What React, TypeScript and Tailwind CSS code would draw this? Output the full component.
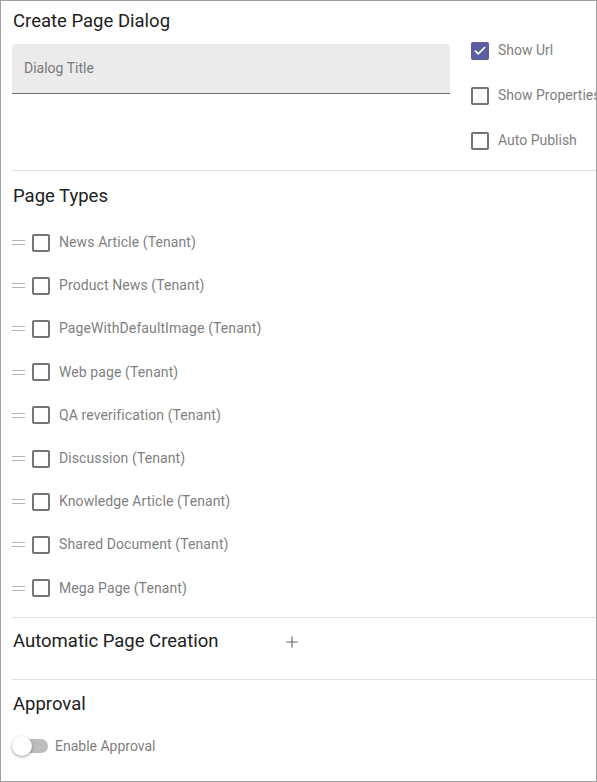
import { Check, Plus } from "lucide-react";

const pageTypes = [
  "News Article (Tenant)",
  "Product News (Tenant)",
  "PageWithDefaultImage (Tenant)",
  "Web page (Tenant)",
  "QA reverification (Tenant)",
  "Discussion (Tenant)",
  "Knowledge Article (Tenant)",
  "Shared Document (Tenant)",
  "Mega Page (Tenant)",
];

const options = [
  { label: "Show Url", checked: true },
  { label: "Show Properties", checked: false },
  { label: "Auto Publish", checked: false },
];

function Checkbox({ checked }: { checked?: boolean }) {
  return checked ? (
    <span className="w-[18px] h-[18px] rounded-[2px] bg-[#5c5f9f] flex items-center justify-center shrink-0">
      <Check size={14} strokeWidth={3} className="text-white" />
    </span>
  ) : (
    <span className="block w-[18px] h-[18px] rounded-[2px] border-2 border-[#757575] shrink-0" />
  );
}

function DragHandle() {
  return (
    <span className="w-[13px] flex flex-col gap-[3px] shrink-0">
      <span className="h-px bg-[#b5b5b5]" />
      <span className="h-px bg-[#b5b5b5]" />
    </span>
  );
}

export default function App() {
  return (
    <div
      className="w-[597px] h-[782px] border border-[#a0a0a0] overflow-hidden bg-white pl-[11px] text-[#212121]"
      style={{ fontFamily: "Roboto, 'Noto Sans', sans-serif" }}
    >
      {/* header */}
      <div className="flex pt-2 pb-[7px]">
        <div className="w-[438px] shrink-0">
          <h1 className="text-[18.5px] leading-6 pl-px">Create Page Dialog</h1>
          <div className="mt-[11px] h-[50px] bg-[#ebebeb] rounded-t-[4px] border-b border-[#707070] flex items-center px-3">
            <span className="text-[14px] text-[#7a7a7a]">Dialog Title</span>
          </div>
        </div>
        <div className="ml-[21px] pt-[19px] flex flex-col shrink-0">
          {options.map((o) => (
            <div key={o.label} className="h-[45px] flex items-center gap-[9px] whitespace-nowrap">
              <Checkbox checked={o.checked} />
              <span className="text-[14px] text-[#7f7f7f]">{o.label}</span>
            </div>
          ))}
        </div>
      </div>

      <div className="border-t border-[#e0e0e0]" />

      {/* page types */}
      <div className="pt-[13px] pb-[7px]">
        <h2 className="text-[18.5px] leading-6 pl-px">Page Types</h2>
        <div className="mt-[13px] flex flex-col">
          {pageTypes.map((t) => (
            <div key={t} className="h-[43.2px] flex items-center">
              <DragHandle />
              <span className="ml-[7px] flex">
                <Checkbox />
              </span>
              <span className="ml-[9px] text-[14px] text-[#7f7f7f] tracking-[0.1px]">{t}</span>
            </div>
          ))}
        </div>
      </div>

      <div className="border-t border-[#e0e0e0]" />

      {/* automatic page creation */}
      <div className="pt-[11px] pb-[26px] flex items-center">
        <h2 className="text-[18.5px] leading-6 pl-px w-[271px]">Automatic Page Creation</h2>
        <Plus size={18} strokeWidth={1.5} className="text-[#666] mt-[3px]" />
      </div>

      <div className="border-t border-[#e0e0e0]" />

      {/* approval */}
      <div className="pt-3">
        <h2 className="text-[18.5px] leading-6 pl-px">Approval</h2>
        <div className="mt-[20px] flex items-center">
          <span className="relative w-[36px] h-[20px] flex items-center">
            <span className="ml-[3px] w-[33px] h-[14px] rounded-full bg-[#bdbdbd]" />
            <span className="absolute left-0 top-0 w-[20px] h-[20px] rounded-full bg-white shadow-[0_1px_3px_rgba(0,0,0,0.4)]" />
          </span>
          <span className="ml-[7px] text-[14px] text-[#7f7f7f]">Enable Approval</span>
        </div>
      </div>
    </div>
  );
}
